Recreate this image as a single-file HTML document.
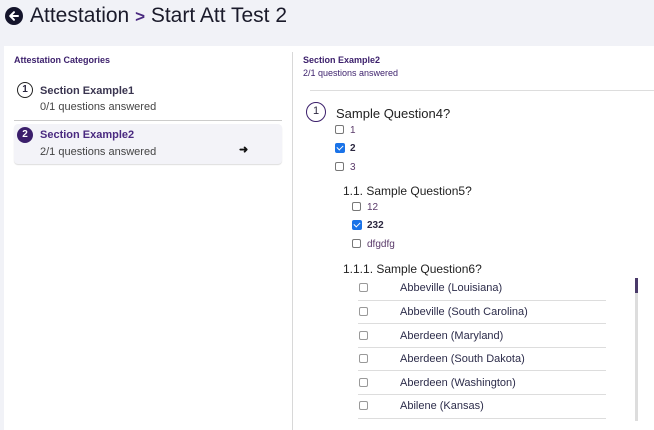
<!DOCTYPE html>
<html><head><style>
*{margin:0;padding:0;box-sizing:border-box}
body{width:654px;height:430px;overflow:hidden;background:#f1f2f7;font-family:"Liberation Sans",sans-serif;position:relative;color:#2c2840}
.a{position:absolute;white-space:nowrap}
.cb{position:absolute;width:9px;height:9px;border:1px solid #777;border-radius:2px;background:#fff}
.cbc{position:absolute;width:10px;height:10px;border-radius:2px;background:#1a73e8}
.cbc:after{content:"";position:absolute;left:3px;top:1px;width:3px;height:5px;border:solid #fff;border-width:0 1.5px 1.5px 0;transform:rotate(45deg)}
.row{position:absolute;left:358px;width:248px;height:1px;background:#ddd}
.opt{font-size:10px;color:#5a3a6a}
.city{font-size:11px;color:#2c2c4a}
</style></head><body>
<svg class="a" style="left:5px;top:7px" width="18" height="18" viewBox="0 0 18 18"><circle cx="9" cy="9" r="9" fill="#14142b"/><path d="M13 9H5.5M9 5.2L5.2 9 9 12.8" stroke="#fff" stroke-width="2" fill="none" stroke-linecap="round" stroke-linejoin="round"/></svg>
<div class="a" style="left:30px;top:4px;font-size:21px;color:#1a1a2a">Attestation <span style="color:#4a2a80;font-weight:bold;font-size:17px">&gt;</span> Start Att Test 2</div>
<div class="a" style="left:4px;top:46px;width:650px;height:384px;background:#fff"></div>
<div class="a" style="left:292px;top:52px;width:1px;height:378px;background:#d8d8d8"></div>
<div class="a" style="left:14px;top:55px;font-size:9px;font-weight:bold;color:#3b1f6b">Attestation Categories</div>
<div class="a" style="left:17px;top:82px;width:16px;height:16px;border:1.3px solid #222;border-radius:50%;font-size:10px;font-weight:bold;text-align:center;line-height:13px">1</div>
<div class="a" style="left:40px;top:85px;font-size:11px;font-weight:bold;color:#3a3550">Section Example1</div>
<div class="a" style="left:40px;top:101px;font-size:11px;color:#444">0/1 questions answered</div>
<div class="a" style="left:14px;top:120px;width:268px;height:1px;background:#ccc"></div>
<div class="a" style="left:14px;top:124px;width:268px;height:40px;background:#f3f3f8;border-radius:4px;box-shadow:0 1px 1px #ddd"></div>
<div class="a" style="left:17px;top:127px;width:16px;height:16px;background:#3b1f6b;border-radius:50%;font-size:10px;font-weight:bold;color:#fff;text-align:center;line-height:16px">2</div>
<div class="a" style="left:40px;top:129px;font-size:11px;font-weight:bold;color:#4a2a80">Section Example2</div>
<div class="a" style="left:40px;top:146px;font-size:11px;color:#444">2/1 questions answered</div>
<div class="a" style="left:239px;top:143px;font-size:11px;font-weight:bold;color:#111">&#10140;</div>

<div class="a" style="left:303px;top:55px;font-size:9px;font-weight:bold;color:#3b1f6b">Section Example2</div>
<div class="a" style="left:303px;top:68px;font-size:9px;color:#3b1f6b">2/1 questions answered</div>
<div class="a" style="left:310px;top:90px;width:344px;height:1px;background:#ddd"></div>
<div class="a" style="left:306px;top:102px;width:20px;height:20px;border:1.3px solid #3b1f6b;border-radius:50%;font-size:11px;text-align:center;line-height:17px">1</div>
<div class="a" style="left:336px;top:106px;font-size:13px;color:#222">Sample Question4?</div>
<div class="cb" style="left:335px;top:125px"></div><div class="a opt" style="left:350px;top:125px">1</div>
<div class="cbc" style="left:335px;top:143px"></div><div class="a opt" style="left:350px;top:143px;font-weight:bold;color:#2c2840">2</div>
<div class="cb" style="left:335px;top:162px"></div><div class="a opt" style="left:350px;top:162px">3</div>
<div class="a" style="left:343px;top:184px;font-size:12px;color:#222">1.1. Sample Question5?</div>
<div class="cb" style="left:352px;top:202px"></div><div class="a opt" style="left:367px;top:202px">12</div>
<div class="cbc" style="left:352px;top:220px"></div><div class="a opt" style="left:367px;top:220px;font-weight:bold;color:#2c2840">232</div>
<div class="cb" style="left:352px;top:239px"></div><div class="a opt" style="left:367px;top:239px">dfgdfg</div>
<div class="a" style="left:343px;top:262px;font-size:12px;color:#222">1.1.1. Sample Question6?</div>

<div class="cb" style="left:359px;top:283px;border-color:#999"></div><div class="a city" style="left:400px;top:282px">Abbeville (Louisiana)</div>
<div class="row" style="top:300px"></div>
<div class="cb" style="left:359px;top:307px;border-color:#999"></div><div class="a city" style="left:400px;top:306px">Abbeville (South Carolina)</div>
<div class="row" style="top:323px"></div>
<div class="cb" style="left:359px;top:331px;border-color:#999"></div><div class="a city" style="left:400px;top:330px">Aberdeen (Maryland)</div>
<div class="row" style="top:347px"></div>
<div class="cb" style="left:359px;top:354px;border-color:#999"></div><div class="a city" style="left:400px;top:353px">Aberdeen (South Dakota)</div>
<div class="row" style="top:370px"></div>
<div class="cb" style="left:359px;top:378px;border-color:#999"></div><div class="a city" style="left:400px;top:377px">Aberdeen (Washington)</div>
<div class="row" style="top:394px"></div>
<div class="cb" style="left:359px;top:401px;border-color:#999"></div><div class="a city" style="left:400px;top:400px">Abilene (Kansas)</div>
<div class="row" style="top:418px"></div>
<div class="a" style="left:635px;top:278px;width:3px;height:143px;background:#ddd"></div>
<div class="a" style="left:635px;top:278px;width:3px;height:15px;background:#4a3a6a"></div>
</body></html>
